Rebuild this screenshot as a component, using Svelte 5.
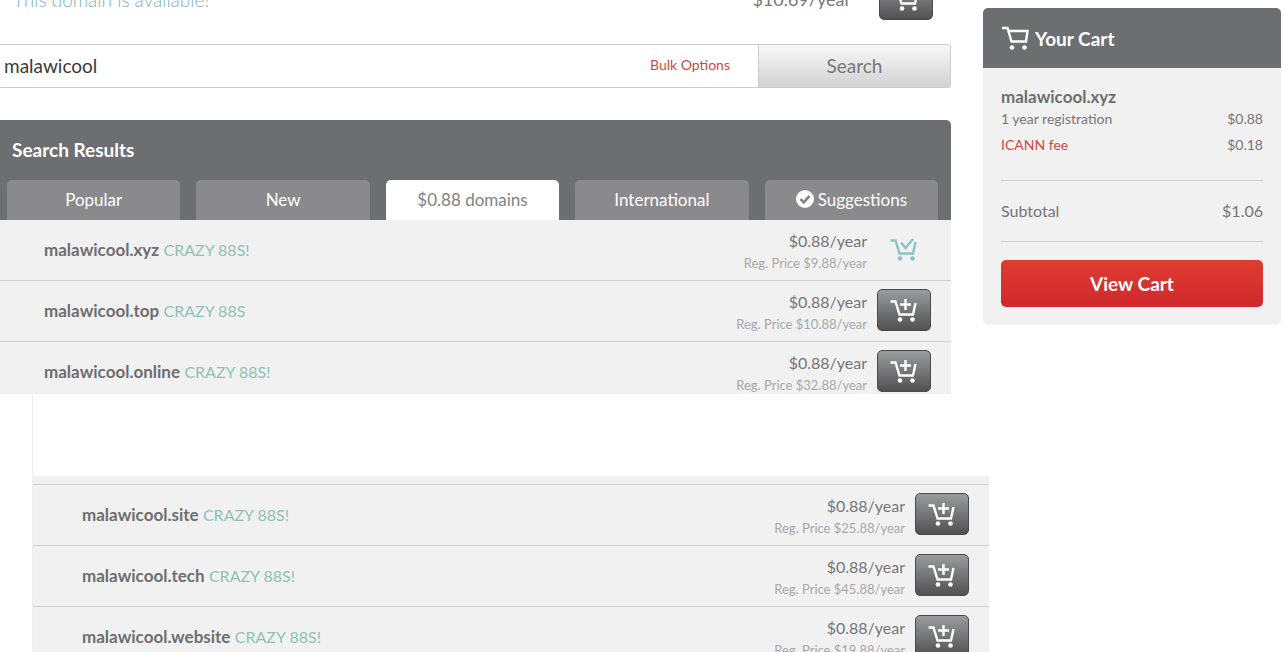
<script>
  let query = $state('malawicool');
  let activeTab = $state('$0.88 domains');

  const tabs = ['Popular', 'New', '$0.88 domains', 'International', 'Suggestions'];

  const results = [
    { name: 'malawicool.xyz', promo: 'CRAZY 88S!', price: '$0.88', regular: '$9.88', inCart: true },
    { name: 'malawicool.top', promo: 'CRAZY 88S', price: '$0.88', regular: '$10.88' },
    { name: 'malawicool.online', promo: 'CRAZY 88S!', price: '$0.88', regular: '$32.88' }
  ];

  const moreResults = [
    { name: 'malawicool.site', promo: 'CRAZY 88S!', price: '$0.88', regular: '$25.88' },
    { name: 'malawicool.tech', promo: 'CRAZY 88S!', price: '$0.88', regular: '$45.88' },
    { name: 'malawicool.website', promo: 'CRAZY 88S!', price: '$0.88', regular: '$19.88' }
  ];
</script>

{#snippet cartIcon(kind)}
  <svg class="cart-icon" viewBox="0 0 28 26" width="28" height="26" fill="none" stroke="currentColor" stroke-width="2.400" aria-hidden="true">
    {#if kind === 'full'}
      <path d="M0 3h5.500l4 13.500h14.500L25.500 6H7" />
    {:else}
      <path d="M0.500 4.500h5l4 13h13.500L25.500 6" />
    {/if}
    {#if kind === 'add'}
      <path d="M15.500 2v11M10 7.500h11" />
    {:else if kind === 'added'}
      <path d="M11 6.500l4.500 5.500L23 3" />
    {/if}
    <circle cx="10" cy="22.500" r="2.300" fill="currentColor" stroke="none" />
    <circle cx="22.500" cy="22.500" r="2.300" fill="currentColor" stroke="none" />
  </svg>
{/snippet}

{#snippet resultRow(item)}
  <li class="result">
    <p class="domain"><strong>{item.name}</strong> <span class="promo">{item.promo}</span></p>
    <div class="pricing">
      <span class="price">{item.price}/year</span>
      <span class="regular">Reg. Price {item.regular}/year</span>
    </div>
    {#if item.inCart}
      <span class="in-cart" role="img" aria-label="In cart">{@render cartIcon('added')}</span>
    {:else}
      <button class="add" type="button" aria-label="Add {item.name} to cart">{@render cartIcon('add')}</button>
    {/if}
  </li>
{/snippet}

<div class="page">
  <div class="columns">
    <main>
      <div class="available">
        <p class="available-text">This domain is available!</p>
        <p class="available-price">$10.69/year</p>
        <button class="add" type="button" aria-label="Add to cart">{@render cartIcon('add')}</button>
      </div>

      <form class="search" onsubmit={(e) => e.preventDefault()}>
        <input type="text" aria-label="Domain name" bind:value={query} />
        <a href="#bulk">Bulk Options</a>
        <button type="submit">Search</button>
      </form>

      <section class="results">
        <header>
          <h2>Search Results</h2>
          <nav class="tabs">
            {#each tabs as tab}
              <button type="button" class:active={tab === activeTab} onclick={() => (activeTab = tab)}>
                {#if tab === 'Suggestions'}
                  <svg viewBox="0 0 18 18" width="18" height="18" aria-hidden="true">
                    <circle cx="9" cy="9" r="9" fill="#fff" />
                    <path d="M4.500 9l3.200 3.300L13.500 6" fill="none" stroke="#858587" stroke-width="2.600" />
                  </svg>
                {/if}
                {tab}
              </button>
            {/each}
          </nav>
        </header>
        <ul class="list clipped">
          {#each results as item}
            {@render resultRow(item)}
          {/each}
        </ul>
      </section>
    </main>

    <aside class="cart">
      <h2>{@render cartIcon('full')}Your Cart</h2>
      <div class="cart-body">
        <h3>malawicool.xyz</h3>
        <p class="line"><span>1 year registration</span><span>$0.88</span></p>
        <p class="line fee"><a href="#icann">ICANN fee</a><span>$0.18</span></p>
        <p class="subtotal"><span>Subtotal</span><span>$1.06</span></p>
        <button class="view-cart" type="button">View Cart</button>
      </div>
    </aside>
  </div>

  <section class="more">
    <ul class="list">
      {#each moreResults as item}
        {@render resultRow(item)}
      {/each}
    </ul>
  </section>
</div>

<style>
  :global(body) {
    background: #fff;
  }

  .page {
    height: 100vh;
    overflow: hidden;
    font-family: Lato, 'Open Sans', sans-serif;
    font-size: 17px;
    color: #757678;
  }

  .page * {
    box-sizing: border-box;
  }

  h2,
  h3,
  p,
  ul {
    margin: 0;
    padding: 0;
  }

  button,
  input {
    font: inherit;
    color: inherit;
  }

  button {
    cursor: pointer;
  }

  a {
    color: #cc4a40;
    text-decoration: none;
  }

  .cart-icon {
    display: block;
    flex: none;
  }

  .columns {
    display: grid;
    grid-template-columns: minmax(0, 1fr) 298px;
    column-gap: 32px;
    align-items: start;
    padding-right: 5px;
  }

  /* Domain availability strip, scrolled mostly out of view */
  .available {
    display: flex;
    align-items: flex-end;
    height: 20px;
    margin-bottom: 24px;
    padding: 0 18px 0 13px;
    overflow: hidden;
    font-size: 18px;
    line-height: 42px;
  }

  .available-text {
    flex: 1;
    font-size: 19px;
    font-weight: 300;
    line-height: 40px;
    color: #7fb5b0;
  }

  .available-price {
    margin-right: 28px;
  }

  .search {
    display: flex;
    align-items: center;
    height: 44px;
    margin-bottom: 32px;
    border: 1px solid #ccc;
    border-left: 0;
    border-radius: 0 4px 4px 0;
    overflow: hidden;
  }

  .search input {
    flex: 1;
    min-width: 0;
    height: 100%;
    padding: 0 4px 2px;
    border: 0;
    outline: 0;
    background: #fff;
    font-size: 19px;
    color: #3a3a3b;
  }

  .search a {
    margin-right: 28px;
    padding-bottom: 4px;
    font-size: 14px;
  }

  .search button {
    width: 192px;
    height: 100%;
    padding: 0 0 2px;
    border: 0;
    border-left: 1px solid #ccc;
    background: linear-gradient(#f8f8f8, #d2d2d3);
    font-size: 19px;
  }

  .results header {
    background: #6d6e70;
    border-radius: 0 5px 0 0;
    color: #fff;
  }

  .results h2 {
    padding: 0 12px;
    font-size: 19px;
    line-height: 60px;
  }

  .tabs {
    display: flex;
    gap: 16px;
    padding: 0 13px 0 7px;
  }

  .tabs button {
    display: flex;
    flex: 1 1 0;
    align-items: center;
    justify-content: center;
    gap: 4px;
    height: 40px;
    padding: 0 0 2px;
    border: 0;
    border-radius: 5px 5px 0 0;
    background: #8a8a8c;
    color: #fff;
  }

  .tabs .active {
    background: #fff;
    color: #828385;
  }

  .list {
    list-style: none;
    background: #f1f1f1;
  }

  .clipped {
    height: 174px;
    overflow: hidden;
  }

  .result {
    display: flex;
    align-items: center;
    height: 61px;
    padding: 0 20px 2px 44px;
    border-bottom: 1px solid #d0d0d0;
  }

  .domain {
    flex: 1;
  }

  strong,
  h3 {
    color: #6d6e70;
  }

  .promo {
    font-size: 16px;
    color: #8fc1b6;
  }

  .pricing {
    display: flex;
    flex-direction: column;
    margin-right: 10px;
    padding-top: 6px;
    text-align: right;
    line-height: 22px;
  }

  .price {
    font-size: 16px;
  }

  .regular {
    font-size: 13px;
    color: #a7a8aa;
  }

  .add,
  .in-cart {
    display: flex;
    flex: none;
    align-items: center;
    justify-content: center;
    width: 54px;
    height: 42px;
    padding: 0;
  }

  .add {
    border: 1px solid #4a4a4b;
    border-radius: 5px;
    background: linear-gradient(#9a9b9d, #515152);
    color: #fff;
  }

  .in-cart {
    color: #8cc3c4;
  }

  .cart {
    margin-top: 8px;
    border-radius: 5px;
    background: #f1f1f1;
    overflow: hidden;
  }

  .cart h2 {
    display: flex;
    align-items: center;
    gap: 5px;
    height: 60px;
    padding: 0 19px;
    background: #6d6e70;
    font-size: 19px;
    color: #fff;
  }

  .cart-body {
    padding: 18px;
  }

  .cart h3 {
    font-size: 17px;
    line-height: 22px;
  }

  .line,
  .subtotal {
    display: flex;
    justify-content: space-between;
  }

  .line {
    font-size: 14px;
    line-height: 22px;
  }

  .fee {
    margin: 4px 0 24px;
  }

  .subtotal {
    margin-bottom: 18px;
    border: 1px solid #d0d0d0;
    border-width: 1px 0;
    font-size: 16px;
    line-height: 60px;
  }

  .view-cart {
    width: 100%;
    height: 47px;
    border: 0;
    border-radius: 5px;
    background: linear-gradient(#e03c31, #d0282c);
    font-size: 19px;
    font-weight: bold;
    color: #fff;
  }

  .more {
    margin: 0 297px 0 32px;
    padding-top: 82px;
    border-left: 1px solid #eee;
  }

  .more .list {
    padding-top: 8px;
  }

  .more .result {
    padding-left: 49px;
    border-top: 1px solid #d0d0d0;
    border-bottom: 0;
  }
</style>
